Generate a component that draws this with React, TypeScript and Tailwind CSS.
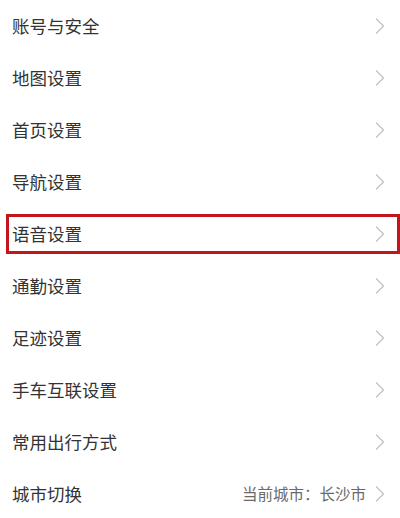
import React from "react";

const items = [
  "账号与安全",
  "地图设置",
  "首页设置",
  "导航设置",
  "语音设置",
  "通勤设置",
  "足迹设置",
  "手车互联设置",
  "常用出行方式",
  "城市切换",
];

function Chevron() {
  return (
    <svg width="12" height="18" viewBox="0 0 12 18" className="shrink-0">
      <path d="M2 1.5 L9.5 9 L2 16.5" fill="none" stroke="#c4c4c4" strokeWidth="1.4" />
    </svg>
  );
}

export default function App() {
  return (
    <div
      className="w-[400px] h-[518px] overflow-hidden bg-white"
      style={{ fontFamily: '"Noto Sans CJK SC", "Noto Sans", sans-serif' }}
    >
      {items.map((t, i) => (
        <div key={t} className="relative h-[52px] flex items-center pl-[12px] pr-[14px]">
          {i === 4 && (
            <div className="absolute left-[6px] right-0 top-[6px] bottom-[6px] border-[3px] border-[#c0161c]" />
          )}
          <span className="flex-1 text-[17.5px] text-[#333333] leading-none">{t}</span>
          {i === 9 && (
            <span className="text-[15.5px] text-[#6a6a6a] mr-[8px] leading-none">当前城市：长沙市</span>
          )}
          <Chevron />
        </div>
      ))}
    </div>
  );
}
